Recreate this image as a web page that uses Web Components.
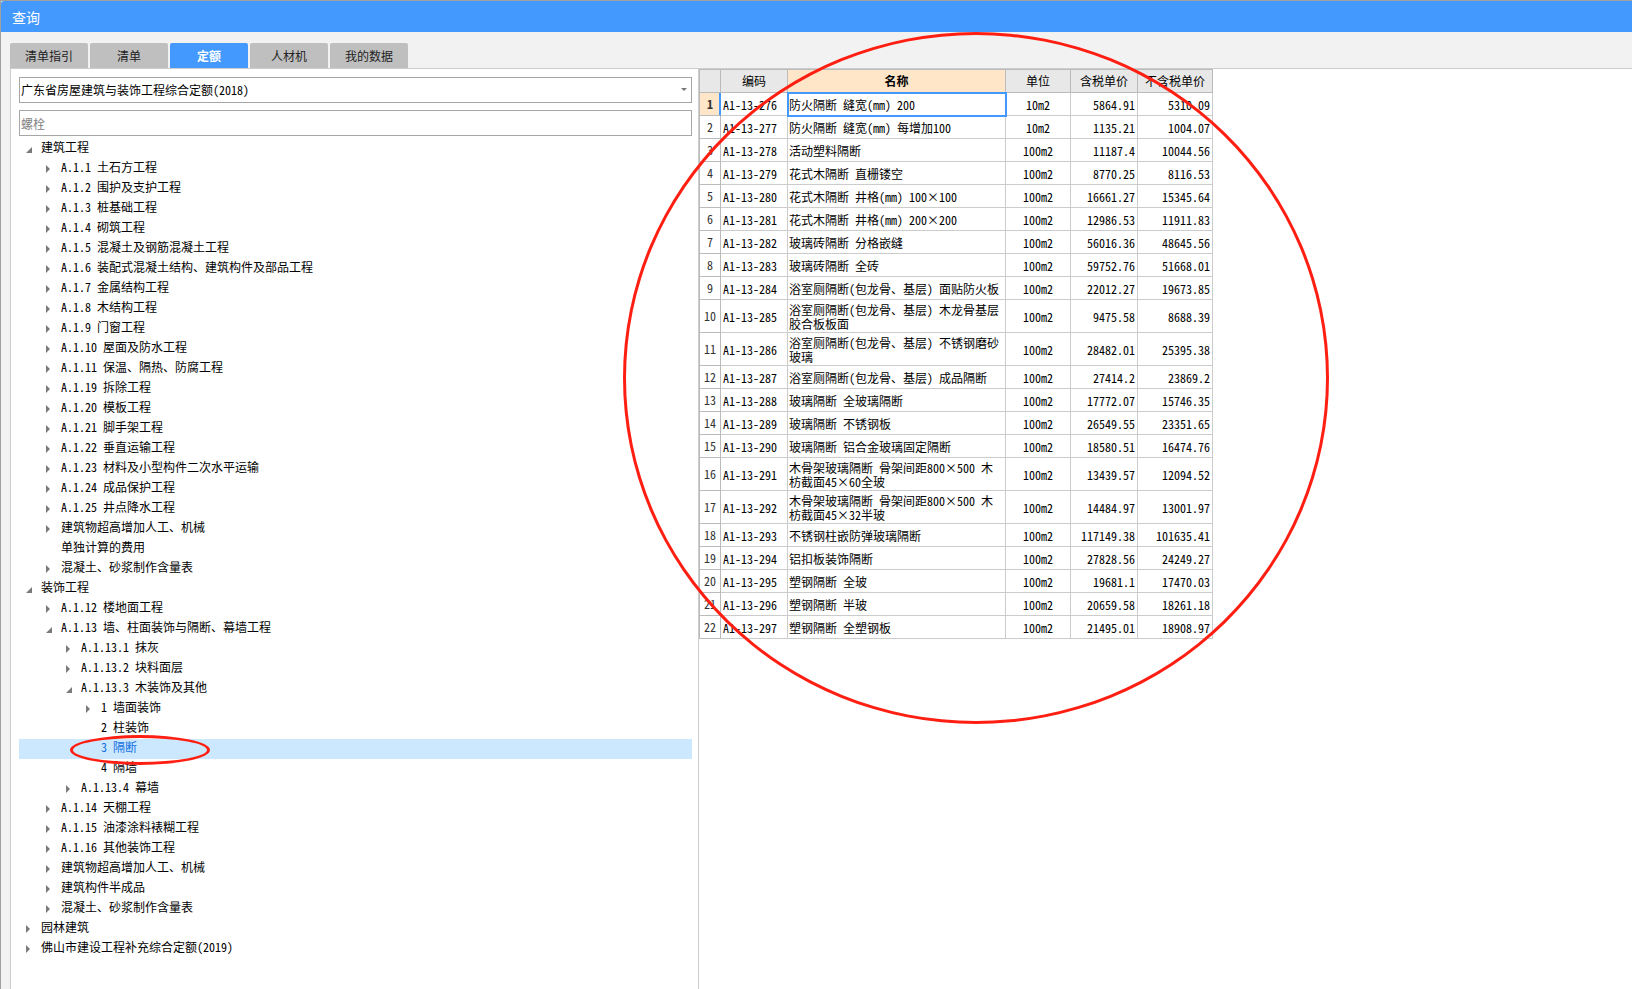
<!DOCTYPE html>
<html lang="zh-CN">
<head>
<meta charset="utf-8">
<title>查询</title>
<style>
  html, body { height: 100%; margin: 0; }
  body {
    font: 12px/16px "Noto Sans Mono CJK SC", "Noto Sans CJK SC", sans-serif;
    color: #000;
  }
</style>
</head>
<body>
<query-window heading="查询"></query-window>

<script>
const BLUE = '#4499ff';

/* ---- annotation ellipse laid over the content ---- */
class MarkEllipse extends HTMLElement {
  connectedCallback() {
    this.attachShadow({ mode: 'open' }).innerHTML = `
      <style>
        :host { position: absolute; pointer-events: none; box-sizing: border-box;
                border: 3px solid #ff1f12; border-radius: 50%; z-index: 5; }
      </style>`;
  }
}
customElements.define('mark-ellipse', MarkEllipse);

/* ---- tabs ---- */
class TabStrip extends HTMLElement {
  connectedCallback() {
    const tabs = ['清单指引', '清单', '定额', '人材机', '我的数据'];
    this.attachShadow({ mode: 'open' }).innerHTML = `
      <style>
        :host { display: flex; gap: 2px; padding: 11px 9px 0; }
        button { width: 78px; height: 25px; padding: 0; border: 0; border-radius: 2px 2px 0 0;
                 background: #bfbfbf; color: #222; font: inherit; }
        button[aria-selected=true] { background: ${BLUE}; color: #fff; font-weight: bold; }
      </style>
      ${tabs.map(t => `<button role="tab" aria-selected="${t === '定额'}">${t}</button>`).join('')}`;
    this.setAttribute('role', 'tablist');
  }
}
customElements.define('tab-strip', TabStrip);

/* ---- tree row: level, state (open | closed | leaf), text in the slot ---- */
class TreeRow extends HTMLElement {
  connectedCallback() {
    const state = this.getAttribute('state');
    const arrow = state === 'closed' ? '<path d="M0 2v8l4-4z"/>'
      : state === 'open' ? '<path d="M0 10h6V4z"/>' : '';
    this.attachShadow({ mode: 'open' }).innerHTML = `
      <style>
        :host { display: flex; height: 20px; box-sizing: border-box; white-space: nowrap;
                padding-left: calc(7px + 20px * ${this.getAttribute('level')}); }
        :host([selected]) { background: #cce8ff; color: #1270e0; position: relative; }
        svg { width: 6px; height: 12px; margin: 4px 9px 0 0; fill: #7a7a7a; flex: none; }
      </style>
      <svg viewBox="0 0 6 12" aria-hidden="true">${arrow}</svg><slot></slot><slot name="mark"></slot>`;
    this.setAttribute('role', 'treeitem');
  }
}
customElements.define('tree-row', TreeRow);

/* Each line: level, state mark (+ closed, - open, . leaf, * selected leaf), label */
const TREE = `0-建筑工程
1+A.1.1 土石方工程
1+A.1.2 围护及支护工程
1+A.1.3 桩基础工程
1+A.1.4 砌筑工程
1+A.1.5 混凝土及钢筋混凝土工程
1+A.1.6 装配式混凝土结构、建筑构件及部品工程
1+A.1.7 金属结构工程
1+A.1.8 木结构工程
1+A.1.9 门窗工程
1+A.1.10 屋面及防水工程
1+A.1.11 保温、隔热、防腐工程
1+A.1.19 拆除工程
1+A.1.20 模板工程
1+A.1.21 脚手架工程
1+A.1.22 垂直运输工程
1+A.1.23 材料及小型构件二次水平运输
1+A.1.24 成品保护工程
1+A.1.25 井点降水工程
1+建筑物超高增加人工、机械
1.单独计算的费用
1+混凝土、砂浆制作含量表
0-装饰工程
1+A.1.12 楼地面工程
1-A.1.13 墙、柱面装饰与隔断、幕墙工程
2+A.1.13.1 抹灰
2+A.1.13.2 块料面层
2-A.1.13.3 木装饰及其他
3+1 墙面装饰
3.2 柱装饰
3*3 隔断
3.4 隔墙
2+A.1.13.4 幕墙
1+A.1.14 天棚工程
1+A.1.15 油漆涂料裱糊工程
1+A.1.16 其他装饰工程
1+建筑物超高增加人工、机械
1+建筑构件半成品
1+混凝土、砂浆制作含量表
0+园林建筑
0+佛山市建设工程补充综合定额(2019)`.split('\n');

class QuotaTree extends HTMLElement {
  connectedCallback() {
    const states = { '+': 'closed', '-': 'open', '.': 'leaf', '*': 'leaf' };
    this.attachShadow({ mode: 'open' }).innerHTML = `
      <style>
        :host { display: block; }
        mark-ellipse { left: 51px; top: -4px; width: 140px; height: 30px; }
      </style>
      ${TREE.map(l => `<tree-row level="${l[0]}" state="${states[l[1]]}"${l[1] === '*' ? ' selected' : ''}>${l.slice(2)}${
        l[1] === '*' ? '<mark-ellipse slot="mark"></mark-ellipse>' : ''}</tree-row>`).join('')}`;
    this.setAttribute('role', 'tree');
  }
}
customElements.define('quota-tree', QuotaTree);

/* ---- left pane: library choice, search box, tree ---- */
class LibraryPane extends HTMLElement {
  connectedCallback() {
    this.attachShadow({ mode: 'open' }).innerHTML = `
      <style>
        :host { display: block; padding: 8px 6px 0 8px; box-sizing: border-box; }
        .field { display: block; position: relative; margin-bottom: 7px; }
        .field + .field { margin-bottom: 3px; }
        select, input { display: block; width: 100%; height: 26px; box-sizing: border-box; margin: 0;
          border: 1px solid #a6a6a6; border-radius: 0; background: #fff; color: #000;
          font: inherit; padding: 0 1px; appearance: none; outline: 0; }
        input::placeholder { color: #808080; opacity: 1; }
        svg { position: absolute; right: 5px; top: 11px; width: 6px; height: 3px; fill: #777; }
      </style>
      <div class="field"><select aria-label="定额库"><option>广东省房屋建筑与装饰工程综合定额(2018)</option></select>
        <svg viewBox="0 0 6 3" aria-hidden="true"><path d="M0 0h6L3 3z"/></svg></div>
      <div class="field"><input type="text" placeholder="螺栓" aria-label="搜索"></div>
      <quota-tree></quota-tree>`;
  }
}
customElements.define('library-pane', LibraryPane);

/* ---- price table ---- */
const ROWS = [
  ['276', '防火隔断 缝宽(mm) 200', '10m2', '5864.91', '5310.09'],
  ['277', '防火隔断 缝宽(mm) 每增加100', '10m2', '1135.21', '1004.07'],
  ['278', '活动塑料隔断', '100m2', '11187.4', '10044.56'],
  ['279', '花式木隔断 直栅镂空', '100m2', '8770.25', '8116.53'],
  ['280', '花式木隔断 井格(mm) 100×100', '100m2', '16661.27', '15345.64'],
  ['281', '花式木隔断 井格(mm) 200×200', '100m2', '12986.53', '11911.83'],
  ['282', '玻璃砖隔断 分格嵌缝', '100m2', '56016.36', '48645.56'],
  ['283', '玻璃砖隔断 全砖', '100m2', '59752.76', '51668.01'],
  ['284', '浴室厕隔断(包龙骨、基层) 面贴防火板', '100m2', '22012.27', '19673.85'],
  ['285', '浴室厕隔断(包龙骨、基层) 木龙骨基层胶合板板面', '100m2', '9475.58', '8688.39'],
  ['286', '浴室厕隔断(包龙骨、基层) 不锈钢磨砂玻璃', '100m2', '28482.01', '25395.38'],
  ['287', '浴室厕隔断(包龙骨、基层) 成品隔断', '100m2', '27414.2', '23869.2'],
  ['288', '玻璃隔断 全玻璃隔断', '100m2', '17772.07', '15746.35'],
  ['289', '玻璃隔断 不锈钢板', '100m2', '26549.55', '23351.65'],
  ['290', '玻璃隔断 铝合金玻璃固定隔断', '100m2', '18580.51', '16474.76'],
  ['291', '木骨架玻璃隔断 骨架间距800×500 木枋截面45×60全玻', '100m2', '13439.57', '12094.52'],
  ['292', '木骨架玻璃隔断 骨架间距800×500 木枋截面45×32半玻', '100m2', '14484.97', '13001.97'],
  ['293', '不锈钢柱嵌防弹玻璃隔断', '100m2', '117149.38', '101635.41'],
  ['294', '铝扣板装饰隔断', '100m2', '27828.56', '24249.27'],
  ['295', '塑钢隔断 全玻', '100m2', '19681.1', '17470.03'],
  ['296', '塑钢隔断 半玻', '100m2', '20659.58', '18261.18'],
  ['297', '塑钢隔断 全塑钢板', '100m2', '21495.01', '18908.97']
];

class PriceTable extends HTMLElement {
  connectedCallback() {
    this.attachShadow({ mode: 'open' }).innerHTML = `
      <style>
        :host { display: block; }
        table { table-layout: fixed; width: 514px; border-collapse: separate; border-spacing: 0;
                border-left: 1px solid #bbb; border-top: 1px solid #bbb; }
        .n { width: 21px; } .c { width: 67px; } .t { width: 218px; }
        .u { width: 65px; } .p { width: 67px; } .q { width: 75px; }
        th, td { box-sizing: border-box; height: 23px; padding: 1px 2px 0; line-height: 14px; vertical-align: middle;
                 border-right: 1px solid #ccc; border-bottom: 1px solid #ccc; text-align: right; }
        thead th { background: #e8e8e8; font-weight: normal; text-align: center; border-color: #bbb;
                   padding: 0; white-space: nowrap; }
        tbody th { font-weight: normal; text-align: center; color: #333; border-color: #bbb; padding: 0; }
        td:nth-child(2) { text-align: left; }
        td:nth-child(3) { text-align: left; padding: 1px 1px 0; }
        td:nth-child(4) { text-align: center; }
        tr.tall > * { height: 33px; }
        thead th.on, tbody th.on { background: #ffe6c8; font-weight: bold; }
        tbody th.on { border-right: 1px solid ${BLUE}; box-shadow: inset -1px 0 ${BLUE}; }
        td.on { outline: 2px solid ${BLUE}; outline-offset: -1px; }
      </style>
      <table>
        <colgroup><col class="n"><col class="c"><col class="t"><col class="u"><col class="p"><col class="q"></colgroup>
        <thead><tr><th></th><th>编码</th><th class="on">名称</th><th>单位</th><th>含税单价</th><th>不含税单价</th></tr></thead>
        <tbody>${ROWS.map((r, i) => `<tr${[9, 10, 15, 16].includes(i) ? ' class="tall"' : ''}>
          <th scope="row"${i ? '' : ' class="on"'}>${i + 1}</th><td>A1-13-${r[0]}</td>
          <td${i ? '' : ' class="on"'}>${r[1]}</td><td>${r[2]}</td><td>${r[3]}</td><td>${r[4]}</td></tr>`).join('')}</tbody>
      </table>`;
  }
}
customElements.define('price-table', PriceTable);

/* ---- the window frame ---- */
class QueryWindow extends HTMLElement {
  connectedCallback() {
    this.attachShadow({ mode: 'open' }).innerHTML = `
      <style>
        :host { display: flex; flex-direction: column; min-height: 100%; box-sizing: border-box;
                border: solid #a0a0a0; border-width: 1px 0 0 1px; background: #f2f2f2; }
        header { display: flex; align-items: center; height: 31px; background: ${BLUE}; color: #fff;
                 padding-left: 11px; border-radius: 3px 0 0 0; }
        h1 { margin: 0; font-size: 14px; font-weight: normal; }
        main { flex: 1; display: grid; grid-template-columns: minmax(0, 687fr) minmax(0, 934fr);
               margin-left: 9px; background: #fff; border: solid #ccc; border-width: 1px 0 0 1px; }
        section { position: relative; border-left: 1px solid #ccc; }
        mark-ellipse { left: -76px; top: -37px; width: 706px; height: 692px; }
      </style>
      <header><h1>${this.getAttribute('heading')}</h1></header>
      <tab-strip></tab-strip>
      <main>
        <library-pane></library-pane>
        <section><price-table></price-table><mark-ellipse></mark-ellipse></section>
      </main>`;
  }
}
customElements.define('query-window', QueryWindow);
</script>
</body>
</html>
